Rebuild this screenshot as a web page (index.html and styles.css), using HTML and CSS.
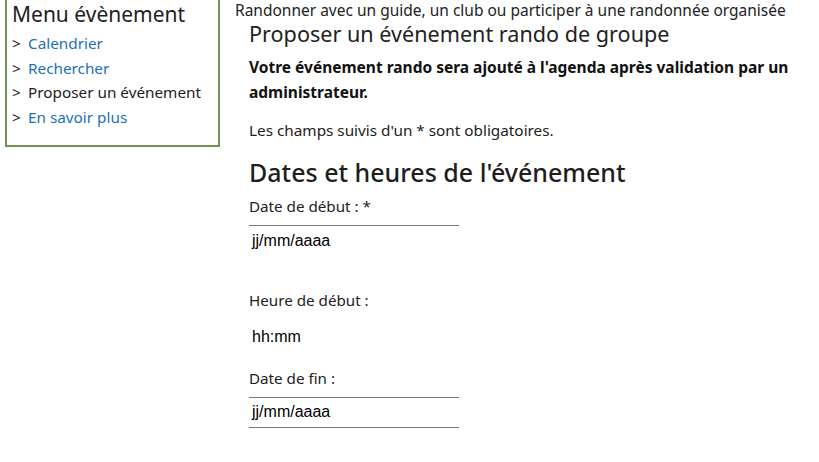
FILE: index.html
```html
<!DOCTYPE html>
<html lang="fr">
<head>
<meta charset="utf-8">
<link rel="stylesheet" href="styles.css">
</head>
<body>
<div class="page">
  <aside class="menu">
    <h2 class="menu-title">Menu évènement</h2>
    <ul class="menu-list">
      <li><span class="chev">&gt;</span><a href="#">Calendrier</a></li>
      <li><span class="chev">&gt;</span><a href="#">Rechercher</a></li>
      <li><span class="chev">&gt;</span><span class="current">Proposer un événement</span></li>
      <li><span class="chev">&gt;</span><a href="#">En savoir plus</a></li>
    </ul>
  </aside>
  <main class="main">
    <p class="tagline">Randonner avec un guide, un club ou participer à une randonnée organisée</p>
    <section class="content">
      <h1 class="title">Proposer un événement rando de groupe</h1>
      <p class="notice">Votre événement rando sera ajouté à l'agenda après validation par un administrateur.</p>
      <p class="required">Les champs suivis d'un * sont obligatoires.</p>
      <h2 class="section-title">Dates et heures de l'événement</h2>
      <div class="field">
        <label class="label">Date de début : *</label>
        <div class="input input-top">jj/mm/aaaa</div>
      </div>
      <div class="field field-time">
        <label class="label">Heure de début :</label>
        <div class="input input-time">hh:mm</div>
      </div>
      <div class="field">
        <label class="label">Date de fin :</label>
        <div class="input input-top input-bottom">jj/mm/aaaa</div>
      </div>
    </section>
  </main>
</div>
</body>
</html>
```

FILE: styles.css
```css
* { box-sizing: border-box; }
html, body { margin: 0; padding: 0; background: #fff; }
body {
  font-family: "Noto Sans", "Open Sans", sans-serif;
  color: #222;
  font-size: 15.3px;
}
.page {
  display: flex;
  align-items: flex-start;
  gap: 15px;
  padding-left: 5px;
}
.menu {
  width: 215px;
  flex: none;
  margin-top: -12px;
  border: 2px solid #739150;
  padding: 10px 5px 16px 5px;
}
.menu-title {
  margin: 0;
  font-size: 21px;
  font-weight: normal;
  line-height: 28px;
  color: #1e1e1e;
}
.menu-list {
  list-style: none;
  margin: 3px 0 0 0;
  padding: 0;
}
.menu-list li {
  line-height: 24.6px;
  font-size: 15.3px;
  color: #222;
}
.chev { display: inline-block; width: 16px; }
.menu-list a { color: #1f6fb8; text-decoration: none; }
.main { flex: 1; }
.tagline {
  margin: 0;
  line-height: 20px;
  font-size: 15.5px;
  color: #222;
}
.content { padding-left: 14px; }
.title {
  margin: -1px 0 0 0;
  font-size: 21.6px;
  font-weight: normal;
  line-height: 30px;
  color: #222;
}
.notice {
  margin: 6px 0 0 0;
  font-weight: bold;
  font-size: 15.5px;
  line-height: 25px;
  color: #111;
  max-width: 548px;
}
.required {
  margin: 14px 0 0 0;
  line-height: 22px;
  font-size: 15.3px;
}
.section-title {
  margin: 14px 0 0 0;
  font-size: 25px;
  font-weight: 500;
  line-height: 34px;
  color: #1e1e1e;
}
.label {
  display: block;
  font-size: 15.2px;
  line-height: 20px;
  margin-top: 7px;
}
.input {
  width: 210px;
  height: 31px;
  margin-top: 9px;
  padding: 3px 3px 0;
  font-family: "Liberation Sans", Arial, sans-serif;
  font-size: 16px;
  line-height: 24px;
  color: #000;
}
.input-time { margin-top: 12px; }
.input-top { border-top: 1px solid #777; }
.input-bottom { border-bottom: 1px solid #777; height: 31px; padding-top: 2px; }
.field + .field { margin-top: 34px; }
.field-time + .field { margin-top: 15px; }
```
